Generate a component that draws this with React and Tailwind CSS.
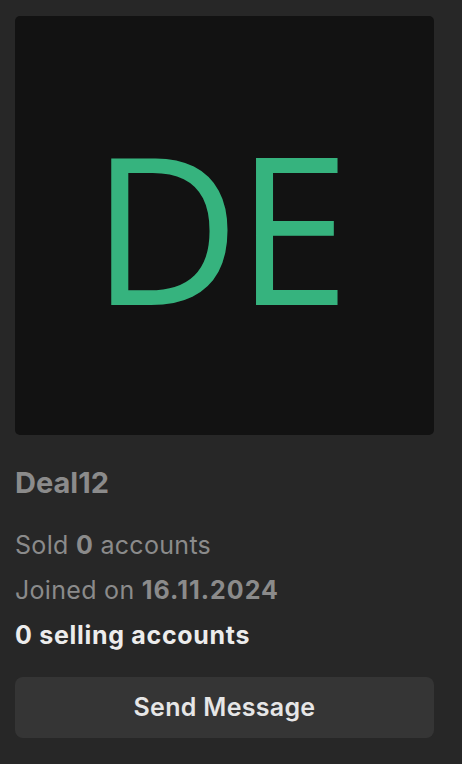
import React from 'react'

export default function App() {
    return (
        <div
            className="min-h-screen w-full bg-[#272727] px-[15px] pt-4"
            style={{ fontFamily: 'Inter, "Noto Sans", sans-serif' }}
        >
            <div className="flex h-[419px] w-[419px] items-center justify-center rounded-[5px] bg-[#121212]">
                <span
                    className="pr-[12px] text-[205px] font-medium leading-none tracking-[-4px] text-[#36b37e]"
                    style={{ fontFamily: '"Open Sans", sans-serif' }}
                >
                    DE
                </span>
            </div>

            <div className="mt-[33px] text-[29px] font-bold leading-none text-[#8b8b8b]">Deal12</div>

            <div className="mt-[26px] flex flex-col text-[25px] leading-[45px] tracking-[0.3px]">
                <div className="text-[#8b8b8b]">
                    Sold <span className="font-bold">0</span> accounts
                </div>
                <div className="text-[#8b8b8b]">
                    Joined on <span className="font-bold tracking-[1px]">16.11.2024</span>
                </div>
                <div className="font-bold tracking-[0.7px] text-[#ececec]">0 selling accounts</div>
            </div>

            <button className="mt-[19px] flex h-[61px] w-[419px] items-center justify-center rounded-[8px] bg-[#353535] text-[25px] font-semibold tracking-[0.3px] text-[#e6e6e6]">
                Send Message
            </button>
        </div>
    )
}
